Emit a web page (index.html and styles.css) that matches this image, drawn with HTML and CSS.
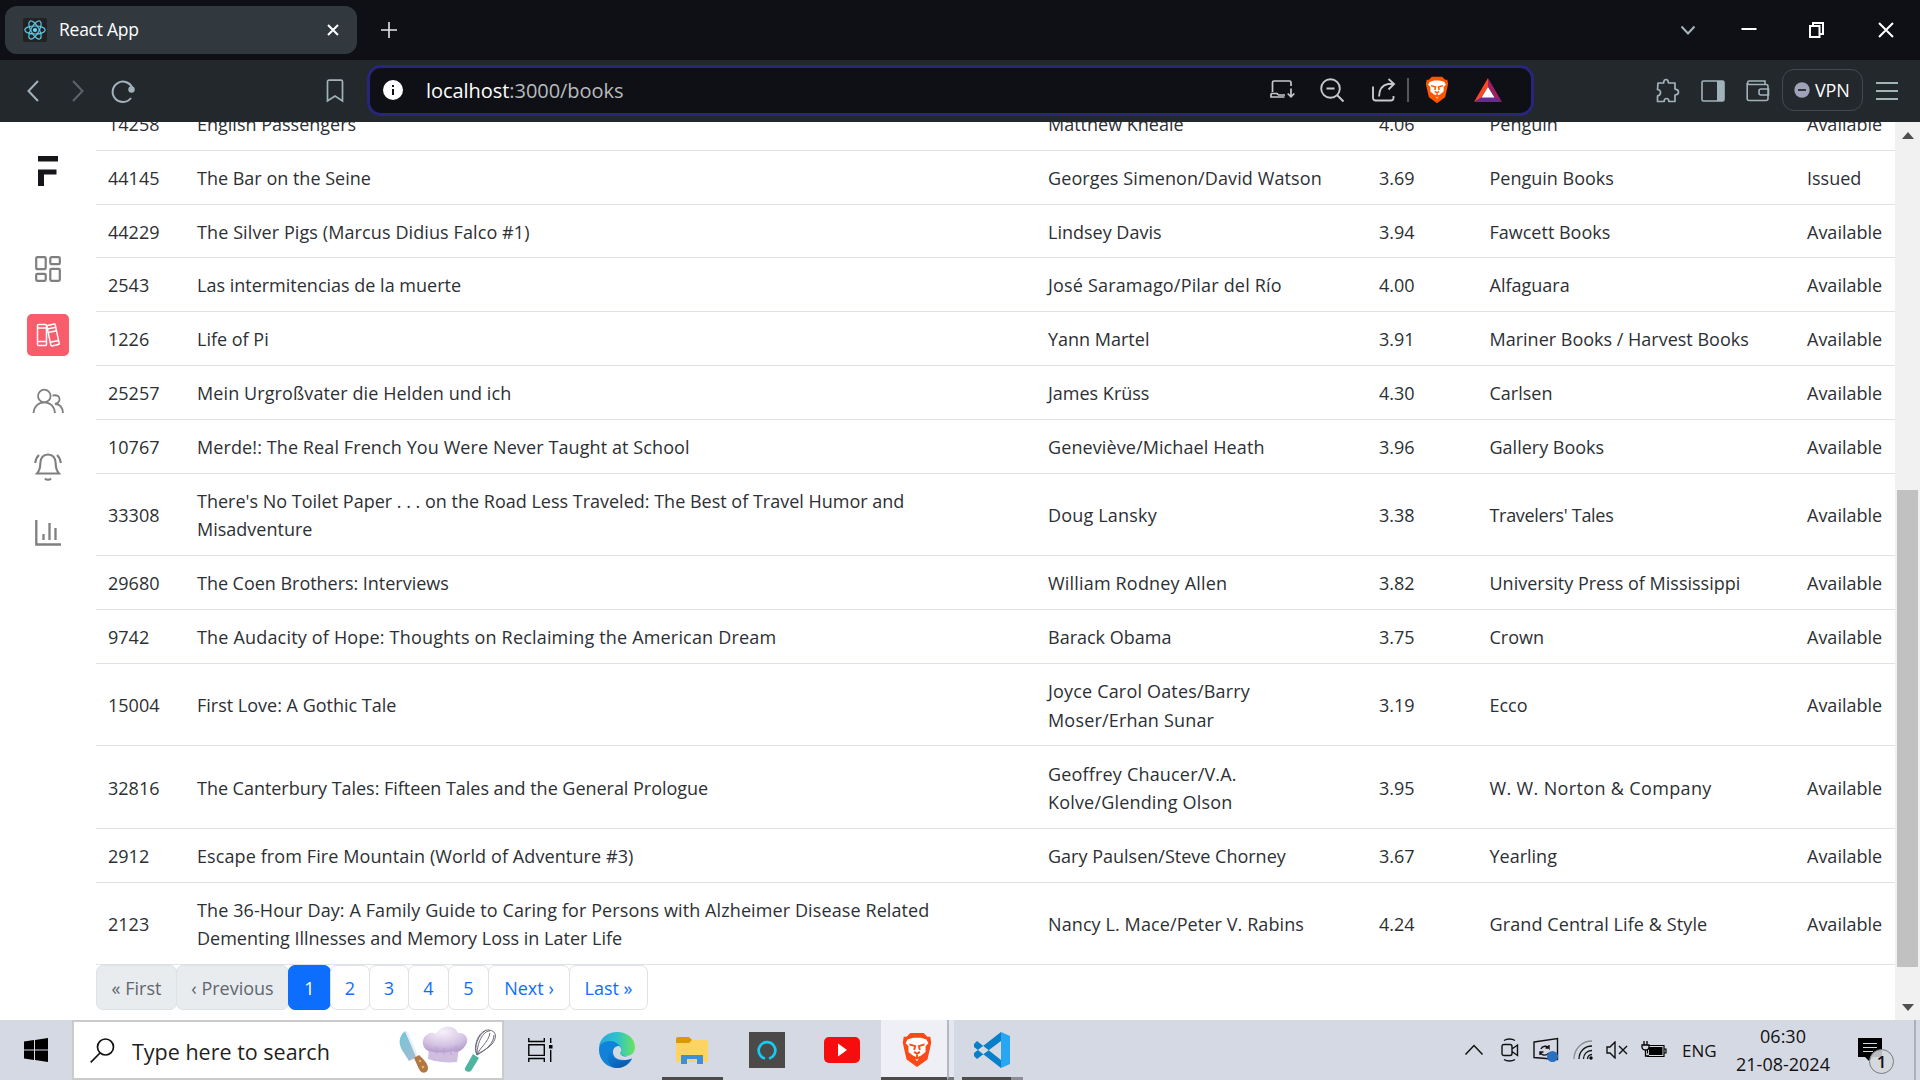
FILE: index.html
```html
<!DOCTYPE html>
<html lang="en">
<head>
<meta charset="utf-8">
<title>React App</title>
<link rel="stylesheet" href="styles.css">
</head>
<body>
<div class="screen">
  <header class="tabstrip">
    <div class="tab">
      <svg class="tab-icon" width="24" height="24" viewBox="0 0 24 24"><rect width="24" height="24" rx="2" fill="#222"/><g fill="none" stroke="#5fc9e6" stroke-width="1.2"><ellipse cx="12" cy="12" rx="10.2" ry="4"/><ellipse cx="12" cy="12" rx="10.2" ry="4" transform="rotate(60 12 12)"/><ellipse cx="12" cy="12" rx="10.2" ry="4" transform="rotate(120 12 12)"/></g><circle cx="12" cy="12" r="2.1" fill="#61dafb"/></svg>
      <span class="tab-title">React App</span>
      <svg class="tab-close" width="12" height="12" viewBox="0 0 12 12"><path d="M1 1l10 10M11 1L1 11" stroke="#fff" stroke-width="2"/></svg>
    </div>
    <svg class="new-tab" width="18" height="18" viewBox="0 0 18 18"><path d="M9 1v16M1 9h16" stroke="#e4e6ea" stroke-width="1.6"/></svg>
    <div class="window-controls">
      <svg width="48" height="30" viewBox="0 0 48 30"><path d="M17.500 11.500l6.500 7 6.500-7" fill="none" stroke="#a6b4bc" stroke-width="2"/></svg>
      <svg width="68" height="30" viewBox="0 0 68 30"><path d="M29.500 14h15" stroke="#fff" stroke-width="2"/></svg>
      <svg width="68" height="30" viewBox="0 0 68 30"><path d="M30 11h9.500v11H30zM33 11V8h10v11h-3" fill="none" stroke="#fff" stroke-width="2"/></svg>
      <svg class="close" width="70" height="30" viewBox="0 0 70 30"><path d="M29 8l14 14M43 8L29 22" stroke="#fff" stroke-width="2"/></svg>
    </div>
  </header>

  <nav class="toolbar">
    <div class="nav-left">
      <svg width="66" height="32" viewBox="0 0 66 32"><path d="M38 6l-9.500 10 9.500 10" fill="none" stroke="#a2b2ba" stroke-width="2"/></svg>
      <svg width="24" height="32" viewBox="0 0 24 32"><path d="M7 6l9.500 10L7 26" fill="none" stroke="#5a666c" stroke-width="2"/></svg>
      <svg width="66" height="32" viewBox="0 0 66 32"><path d="M42.500 13.500A10.200 10.200 0 1 0 41 23" fill="none" stroke="#a2b2ba" stroke-width="2"/><circle cx="41.500" cy="14.500" r="3.200" fill="#a2b2ba"/></svg>
      <svg class="bookmark" width="18" height="24" viewBox="0 0 18 24"><path d="M3 1.200h12a1.500 1.500 0 0 1 1.500 1.500V22L9 17 1.500 22V2.700A1.500 1.500 0 0 1 3 1.200z" fill="none" stroke="#a2b2ba" stroke-width="1.700"/></svg>
    </div>
    <div class="url-box">
      <svg width="20" height="20" viewBox="0 0 20 20"><circle cx="10" cy="10" r="10" fill="#fff"/><path d="M10 9v6M10 5v2" stroke="#0f1015" stroke-width="2"/></svg>
      <p class="url"><b>localhost</b>:3000/books</p>
      <div class="url-actions">
        <svg width="26" height="24" viewBox="0 0 26 24"><g fill="none" stroke="#c6c8cb" stroke-width="1.700"><path d="M3.500 14V4.500a1.500 1.500 0 0 1 1.500-1.500h15.500a1.500 1.500 0 0 1 1.500 1.500V8M2 15.500h6l1.500 1.500H16M2 15.500V19h13.500M22 10.500v8M18.700 15.500l3.300 3.300 3.300-3.300"/></g></svg>
        <svg width="26" height="26" viewBox="0 0 26 26"><g fill="none" stroke="#c6c8cb" stroke-width="1.900"><circle cx="11.500" cy="11.500" r="9.300"/><path d="M18 18l6.500 6.500M7.500 11.500h8"/></g></svg>
        <svg width="26" height="26" viewBox="0 0 26 26"><path d="M2 9.500V21a2.500 2.500 0 0 0 2.500 2.500H20a2.500 2.500 0 0 0 2.500-2.500v-2M8 19.500c.3-7.500 3-11.500 9-12.500h6M17.500 2l5.500 5-5.500 5.500" fill="none" stroke="#c6c8cb" stroke-width="1.900"/></svg>
        <i class="url-rule"></i>
        <svg width="24" height="28" viewBox="0 0 32 38"><path d="M9 1h14l4 4 3 0 1 6-1 5-3 13-11 8-11-8L2 16l-1-5 1-6 3 0z" fill="#ff5500"/><path d="M6 8l6-2h8l6 2 2 4-3 3 0 6-5 4-4 6-4-6-5-4V15l-3-3z" fill="#fff"/><path d="M8 13l6 2-1 4M24 13l-6 2 1 4M13 21l3 2 3-2M16 23v4M12 26l4 2 4-2" fill="none" stroke="#ff5500" stroke-width="2"/></svg>
        <svg width="28" height="24" viewBox="0 0 28 24"><path d="M14 0L0 24l7-4L14 9z" fill="#ff4724"/><path d="M14 0l14 24-7-4L14 9z" fill="#9e1f63"/><path d="M0 24h28l-8-5H8z" fill="#662d91"/><path d="M14 9l6.500 10.500h-13z" fill="#fff"/></svg>
      </div>
    </div>
    <div class="nav-right">
      <svg width="26" height="26" viewBox="0 0 26 26"><path d="M3 5h5.500c.6-1.200-.2-3.500 2.500-3.500S13 3.800 13.600 5H20v6c1 .6 3.500 0 3.500 3S21 16.500 20 17v6.500h-6c-.5-1 .2-3-2.500-3s-2 2-2.500 3H2.500V18c1-.6 3-.3 3-3.500s-2-2.500-3-3z" fill="none" stroke="#a2b2ba" stroke-width="1.700" stroke-linejoin="round"/></svg>
      <svg width="24" height="22" viewBox="0 0 24 22"><rect x="1" y="1" width="22" height="20" rx="1.500" fill="none" stroke="#a2b2ba" stroke-width="1.600"/><path d="M16 1h7v20h-7z" fill="#a2b2ba"/></svg>
      <svg width="24" height="22" viewBox="0 0 24 22"><path d="M1.200 3v15.500a2 2 0 0 0 2 2H20a2 2 0 0 0 2-2V6.500a2 2 0 0 0-2-2H3A1.800 1.800 0 0 1 3 1h16v3M22.500 9H15a2 2 0 0 0-2 2v2a2 2 0 0 0 2 2h7.500z" fill="none" stroke="#a2b2ba" stroke-width="1.600"/></svg>
      <div class="vpn"><svg width="16" height="16" viewBox="0 0 16 16"><circle cx="8" cy="8" r="7.700" fill="#a0a1b8"/><path d="M4 8h8" stroke="#23272c" stroke-width="1.800"/></svg><span>VPN</span></div>
      <svg width="22" height="18" viewBox="0 0 22 18"><path d="M0 1h22M0 9h22M0 17h22" stroke="#a2b2ba" stroke-width="1.800"/></svg>
    </div>
  </nav>

  <main class="page">
    <aside class="sidebar">
      <svg class="logo" width="20" height="30" viewBox="0 0 20 30"><path d="M0 0h20v5.500H0zM0 13.500h18.500v5H6V30H0z" fill="#16161a"/></svg>
      <a class="item"><svg width="26" height="26" viewBox="0 0 26 26"><g fill="none" stroke="#7f7f7f" stroke-width="2.200"><rect x="1.200" y="1.200" width="9.500" height="12" rx="1.200"/><rect x="15.300" y="1.200" width="9.500" height="7" rx="1.200"/><rect x="1.200" y="17.800" width="9.500" height="7" rx="1.200"/><rect x="15.300" y="12.800" width="9.500" height="12" rx="1.200"/></g></svg></a>
      <a class="item active"><svg width="24" height="24" viewBox="0 0 24 24"><g fill="none" stroke="#fff" stroke-width="1.500"><rect x="1.500" y="1.500" width="9" height="21" rx="1"/><path d="M1.500 5h9M1.500 18.500h9"/><g transform="rotate(-12 17 12)"><rect x="12.800" y="1.500" width="8.500" height="21" rx="1"/><path d="M12.800 5h8.500M12.800 8.500h8.500M12.800 18.500h8.500"/></g></g></svg></a>
      <a class="item"><svg width="32" height="26" viewBox="0 0 32 26"><g fill="none" stroke="#808080" stroke-width="1.800"><circle cx="12.300" cy="8" r="6.300"/><path d="M1.500 25c.5-6.500 5-10.700 10.800-10.700S22.500 18.500 23 25M20.500 7.500c5-1 7.500 1 7 4.200-.3 2.300-2 3.800-4.500 4.300 4.500 0 7.500 3.500 8 9"/></g></svg></a>
      <a class="item"><svg width="28" height="28" viewBox="0 0 28 28"><g fill="none" stroke="#7f7f7f" stroke-width="2.100"><path d="M3 20.500h22c-3-3.500-3.300-6-3.300-10C21.700 4.500 18.500 1.500 14 1.500S6.300 4.500 6.300 10.500c0 4-.3 6.500-3.300 10zM5 2C2.800 4 1.500 6.500 1.200 10M23 2c2.200 2 3.500 4.500 3.800 8M11 25.500c1.500 1.600 4.500 1.600 6 0"/></g></svg></a>
      <a class="item"><svg width="26" height="26" viewBox="0 0 26 26"><path d="M1.300 0v24.500H26M8.500 14v6M14.500 3v17M20.500 8v12" fill="none" stroke="#7f7f7f" stroke-width="2.300"/></svg></a>
    </aside>

    <section class="content">
      <table class="books">
        <colgroup><col class="c-id"><col class="c-title"><col class="c-author"><col class="c-rating"><col class="c-pub"><col class="c-status"></colgroup>
        <tbody>
          <tr><td>14258</td><td>English Passengers</td><td>Matthew Kneale</td><td>4.06</td><td>Penguin</td><td>Available</td></tr>
          <tr><td>44145</td><td>The Bar on the Seine</td><td class="wide">Georges Simenon/David Watson</td><td>3.69</td><td>Penguin Books</td><td>Issued</td></tr>
          <tr class="short"><td>44229</td><td class="wide">The Silver Pigs (Marcus Didius Falco #1)</td><td>Lindsey Davis</td><td>3.94</td><td>Fawcett Books</td><td>Available</td></tr>
          <tr><td>2543</td><td>Las intermitencias de la muerte</td><td class="wider">José Saramago/Pilar del Río</td><td>4.00</td><td>Alfaguara</td><td>Available</td></tr>
          <tr><td>1226</td><td>Life of Pi</td><td>Yann Martel</td><td>3.91</td><td>Mariner Books / Harvest Books</td><td>Available</td></tr>
          <tr><td>25257</td><td class="wide">Mein Urgroßvater die Helden und ich</td><td>James Krüss</td><td>4.30</td><td>Carlsen</td><td>Available</td></tr>
          <tr><td>10767</td><td class="wide">Merde!: The Real French You Were Never Taught at School</td><td class="wide">Geneviève/Michael Heath</td><td>3.96</td><td>Gallery Books</td><td>Available</td></tr>
          <tr class="double"><td>33308</td><td>There's No Toilet Paper . . . on the Road Less Traveled: The Best of Travel Humor and<br>Misadventure</td><td class="wider">Doug Lansky</td><td>3.38</td><td class="narrow">Travelers' Tales</td><td>Available</td></tr>
          <tr><td>29680</td><td class="slim">The Coen Brothers: Interviews</td><td class="wider">William Rodney Allen</td><td>3.82</td><td>University Press of Mississippi</td><td>Available</td></tr>
          <tr><td>9742</td><td class="wider">The Audacity of Hope: Thoughts on Reclaiming the American Dream</td><td>Barack Obama</td><td>3.75</td><td>Crown</td><td>Available</td></tr>
          <tr class="double"><td>15004</td><td>First Love: A Gothic Tale</td><td class="wider">Joyce Carol Oates/Barry<br>Moser/Erhan Sunar</td><td>3.19</td><td>Ecco</td><td>Available</td></tr>
          <tr class="double tall"><td>32816</td><td class="slim">The Canterbury Tales: Fifteen Tales and the General Prologue</td><td class="wider">Geoffrey Chaucer/V.A.<br>Kolve/Glending Olson</td><td>3.95</td><td class="widest">W. W. Norton &amp; Company</td><td>Available</td></tr>
          <tr><td>2912</td><td class="wide">Escape from Fire Mountain (World of Adventure #3)</td><td>Gary Paulsen/Steve Chorney</td><td>3.67</td><td>Yearling</td><td>Available</td></tr>
          <tr class="double"><td>2123</td><td><span class="wide">The 36-Hour Day: A Family Guide to Caring for Persons with Alzheimer Disease Related</span><br>Dementing Illnesses and Memory Loss in Later Life</td><td class="wide">Nancy L. Mace/Peter V. Rabins</td><td>4.24</td><td class="wide">Grand Central Life &amp; Style</td><td>Available</td></tr>
        </tbody>
      </table>
      <ul class="pagination">
        <li class="disabled w-first">« First</li><li class="disabled w-prev">‹ Previous</li><li class="current">1</li><li>2</li><li>3</li><li class="w-num">4</li><li class="w-num">5</li><li class="w-next">Next ›</li><li class="w-last">Last »</li>
      </ul>
    </section>

    <div class="scrollbar">
      <svg width="12" height="7" viewBox="0 0 12 7"><path d="M6 0l6 7H0z" fill="#505050"/></svg>
      <div class="thumb"></div>
      <svg width="12" height="7" viewBox="0 0 12 7"><path d="M6 7L0 0h12z" fill="#505050"/></svg>
    </div>
  </main>

  <footer class="taskbar">
    <div class="start"><svg width="24" height="24" viewBox="0 0 24 24"><path d="M0 3.400l10-1.400v9.500H0zM11 1.900L24 0v11.500H11zM0 12.500h10V22L0 20.600zM11 12.500h13V24l-13-1.900z" fill="#000"/></svg></div>
    <div class="search">
      <svg width="25" height="25" viewBox="0 0 25 25"><circle cx="15.500" cy="9" r="8" fill="none" stroke="#111" stroke-width="1.700"/><path d="M10 15l-9.300 9.300" stroke="#111" stroke-width="1.700"/></svg>
      <span>Type here to search</span>
      <svg class="food" width="100" height="50" viewBox="0 0 100 50">
        <defs><linearGradient id="blade" x1="0" y1="0" x2="1" y2="1"><stop offset="0" stop-color="#6fc7da"/><stop offset="1" stop-color="#aab9d0"/></linearGradient><radialGradient id="hat" cx=".45" cy=".2" r=".9"><stop offset="0" stop-color="#f7f1fb"/><stop offset=".6" stop-color="#d3c2e2"/><stop offset="1" stop-color="#a98fc6"/></radialGradient></defs>
        <path d="M6 6C0 11-1 18 3 25l7 11 8-4z" fill="url(#blade)"/><path d="M6 6l3 1 10 24-2 1z" fill="#e6f1f7"/><path d="M15 33l5-3c4 4 9 8 9 13 0 6-7 6-9 1z" fill="#b07647"/><circle cx="21" cy="36" r="1.300" fill="#f3b43f"/><circle cx="24" cy="42" r="1.300" fill="#f3b43f"/>
        <path d="M30 21l-1 13c8 3 20 4 29 3l2-14z" fill="#d0bee1"/><path d="M30 26c-7-2-9-13-1-17 4-2 6-1 8 0C41 0 56-1 59 8c8-1 12 7 7 13-3 5-8 7-12 5-8 2-16 2-24 0z" fill="url(#hat)"/><path d="M37 22l1 7M45 23v7M52 23v7M57 21v6" stroke="#b9a1d2" stroke-width=".9"/>
        <g fill="none" stroke="#6c6b7b" stroke-width="1"><path d="M78 30C73 18 82 4 90 5s8 8 3 14-13 8-15 11C78 15 86 5 91 6M78 30c9-5 17-12 17-20M78 30C74 22 80 9 86 6M78 30c3-8 11-12 13-22"/></g><path d="M74 29l6 4-8 13c-2 2-7 0-6-3z" fill="#4fb59f"/>
      </svg>
    </div>
    <div class="apps">
      <div class="app view"><svg width="25" height="24" viewBox="0 0 25 24"><path d="M.8 0v3.500h15.500V0M.8 24v-3.500h15.500V24M.8 6.700h15.500v10.700H.8zM22.700 0v5M22.700 12v12" fill="none" stroke="#000" stroke-width="1.400"/><path d="M21 7h3.500v3.500H21z"/></svg></div>
      <div class="app edge"><svg width="36" height="36" viewBox="0 0 36 36"><defs><linearGradient id="e1"><stop offset="0" stop-color="#2ba8e2"/><stop offset=".5" stop-color="#2ec1cc"/><stop offset="1" stop-color="#6be45b"/></linearGradient><linearGradient id="e2" x1="0" y1="0" x2="1" y2="1"><stop offset="0" stop-color="#0e86dc"/><stop offset="1" stop-color="#0c4da0"/></linearGradient></defs><path d="M0 18C0 8 8 4 18 6l4 6 4 12 7 3c-3 6-9 9-15 9C8 36 0 28 0 18z" fill="#1083d9"/><path d="M0 14C2 5 9 0 18 0c11 0 18 7 18 15 0 6-4 9-9 9-4 0-7-1-6-3 2-2 2-5 0-7C15 7 6 8 0 14z" fill="url(#e1)"/><path d="M12 17c-1 8 7 14 15 11 4-1 6-3 6-3-3 7-9 11-15 11C8 35 6 23 12 17z" fill="url(#e2)"/><path d="M14 20c0-4 3-6 6-6 3 2 3 5 1 7 0 3 5 4 12 4 0 2-3 3-8 3-7 0-11-3-11-8z" fill="#d5d9e3"/></svg></div>
      <div class="app explorer open"><svg width="32" height="27" viewBox="0 0 32 27"><path d="M0 2a2 2 0 0 1 2-2h11l3 3v5H0z" fill="#d99a08"/><path d="M0 6h13l3-3h14a2 2 0 0 1 2 2v20H0z" fill="#fdd461"/><path d="M5 27V18h22v9h-6v-5H11v5z" fill="#3b90d8"/></svg></div>
      <div class="app alexa"><svg width="36" height="36" viewBox="0 0 36 36"><path d="M0 0h36v36H0z" fill="#4b4a48"/><path d="M16 26.500A8.300 8.300 0 1 1 20 26.500" fill="none" stroke="#16cbf3" stroke-width="2.700"/></svg></div>
      <div class="app youtube"><svg width="36" height="26" viewBox="0 0 36 26"><rect width="36" height="26" rx="5" fill="#f70d0d"/><path d="M14 6.500v13l9-6.500z" fill="#fff"/></svg></div>
      <div class="app brave open"><svg width="32" height="36" viewBox="0 0 32 38"><path d="M9 1h14l4 4 3 0 1 6-1 5-3 13-11 8-11-8L2 16l-1-5 1-6 3 0z" fill="#fb4a17"/><path d="M6 8l6-2h8l6 2 2 4-3 3 0 6-5 4-4 6-4-6-5-4V15l-3-3z" fill="#fff"/><path d="M8 13l6 2-1 4M24 13l-6 2 1 4M13 21l3 2 3-2M16 23v4M12 26l4 2 4-2" fill="none" stroke="#fb4a17" stroke-width="2"/></svg></div>
      <div class="stack"></div>
      <div class="app code open"><svg width="36" height="36" viewBox="0 0 36 36"><path d="M0 12l3-3 24 19v8L0 15zM0 24l3 3L27 9V0L0 21z" fill="#087fc9"/><path d="M27 0l9 4v28l-9 4z" fill="#27a6f1"/></svg></div>
      <div class="code-stack"></div>
    </div>
    <div class="tray">
      <svg width="20" height="12" viewBox="0 0 20 12"><path d="M1.500 10.500l8.500-9 8.500 9" fill="none" stroke="#111" stroke-width="1.500"/></svg>
      <svg width="18" height="24" viewBox="0 0 18 24"><path d="M3 6.500h6a2 2 0 0 1 2 2v7a2 2 0 0 1-2 2H3a2 2 0 0 1-2-2v-7a2 2 0 0 1 2-2zM11 11l5.500-4v10.500L11 13.500M3 2.500c3-2 8-2 11 0M3 21.500c3 2 8 2 11 0" fill="none" stroke="#111" stroke-width="1.400"/></svg>
      <svg width="26" height="26" viewBox="0 0 26 26"><path d="M1 5l23.500-3.500v21L1 20.500z" fill="none" stroke="#111" stroke-width="1.400"/><path d="M8 12c1-3 6-4 8-1V8M16 11h-3.500M7 18v-3h3.500M7 15c2 4 6 4 9 1" fill="none" stroke="#111" stroke-width="1.400"/><circle cx="19.500" cy="19.500" r="5.500" fill="#2a70c0"/></svg>
      <svg width="20" height="20" viewBox="0 0 20 20"><g fill="none" stroke-width="1.300"><path d="M1 19C1 9 9 1 19 1" stroke="#8b8e97"/><path d="M6 19C6 11.500 11.500 6 19 6M10.500 19c0-5 3.500-8.500 8.500-8.500M14.500 19c0-2.500 2-4.500 4.500-4.500" stroke="#111"/></g><circle cx="18" cy="18" r="1.700"/></svg>
      <svg width="22" height="18" viewBox="0 0 22 18"><path d="M1 6h3l5-5v16l-5-5H1zM13 5l8 8M21 5l-8 8" fill="none" stroke="#111" stroke-width="1.400"/></svg>
      <svg width="26" height="18" viewBox="0 0 26 18"><path d="M6.500 4.500H23v11H6.500zM23 8h2v4h-2" fill="none" stroke="#000" stroke-width="1.200"/><path d="M8 6h13.500v8H8z"/><path d="M3 0v4M6 0v4M1 4h7v2c0 4-7 4-7 0zM4.500 9v6H8" fill="#d5d9e3" stroke="#000" stroke-width="1.300"/></svg>
      <span class="lang">ENG</span>
      <div class="clock"><span>06:30</span><span>21-08-2024</span></div>
      <div class="notice"><svg width="24" height="23" viewBox="0 0 24 23"><path d="M0 0h24v19h-9l-4 4-4-4H0z"/><path d="M5 5.500h14M5 9.500h14M5 13.500h10" stroke="#d5d9e3" stroke-width="1.200"/></svg><b>1</b></div>
      <i class="peek"></i>
    </div>
  </footer>
</div>
</body>
</html>
```
FILE: styles.css
```css
* { box-sizing: border-box; }
body {
  margin: 0;
  font-family: "Open Sans", "Noto Sans", sans-serif;
  background: #fff;
}
svg { display: block; flex: none; }
.screen {
  width: 1920px;
  height: 1080px;
  display: flex;
  flex-direction: column;
  overflow: hidden;
}

/* Browser tabs */
.tabstrip {
  height: 60px;
  flex: none;
  background: #0e1015;
  display: flex;
  align-items: center;
  padding-left: 5px;
}
.tab {
  width: 352px;
  height: 48px;
  border-radius: 12px;
  background: #31393f;
  display: flex;
  align-items: center;
  padding: 0 18px;
}
.tab-title {
  color: #fff;
  font-size: 17.5px;
  letter-spacing: -0.25px;
  margin: 0 0 2px 12px;
  flex: 1;
}
.new-tab { margin-left: 23px; }
.window-controls { margin-left: auto; display: flex; }
.window-controls .close { margin-left: 2px; }

/* Address bar */
.toolbar {
  height: 62px;
  flex: none;
  background: #23282c;
  display: flex;
  align-items: center;
}
.nav-left { width: 367px; display: flex; align-items: center; }
.bookmark { margin-left: 170px; }
.url-box {
  width: 1167px;
  height: 51px;
  margin-bottom: 2px;
  border: 3px solid #28267a;
  border-radius: 14px;
  background: #0e1015;
  display: flex;
  align-items: center;
  padding: 0 29px 0 13px;
}
.url {
  margin: 0 0 0 23px;
  color: #b9bbbd;
  font-size: 20px;
  letter-spacing: -0.05px;
  flex: 1;
}
.url b { font-weight: 400; color: #fff; }
.url-actions { display: flex; align-items: center; }
.url-actions svg:nth-child(2) { margin-left: 24px; }
.url-actions svg:nth-child(3) { margin-left: 26px; }
.url-rule { width: 2px; height: 24px; background: #55575c; margin: 0 16px 0 10px; }
.url-actions svg:nth-child(6) { margin-left: 25px; }
.nav-right {
  display: flex;
  align-items: center;
  margin-left: 121px;
}
.nav-right > svg:nth-child(2) { margin-left: 20px; }
.nav-right > svg:nth-child(3) { margin-left: 21px; }
.vpn {
  width: 81px;
  height: 42px;
  margin: 0 13px 2px 12px;
  border: 1px solid #3f4b50;
  border-radius: 12px;
  display: flex;
  align-items: center;
  gap: 5px;
  padding-left: 11px;
  color: #fff;
  font-size: 18px;
  letter-spacing: -0.2px;
}

/* Page */
.page {
  height: 898px;
  flex: none;
  display: flex;
  overflow: hidden;
}
.sidebar {
  width: 96px;
  flex: none;
  display: flex;
  flex-direction: column;
  align-items: center;
  padding-top: 34px;
}
.logo { margin-bottom: 62px; }
.item {
  width: 42px;
  height: 42px;
  margin-bottom: 24px;
  border-radius: 5px;
  display: flex;
  align-items: center;
  justify-content: center;
}
.item.active { background: #f95c6a; }
.content { width: 1799px; flex: none; }
.books {
  width: 1799px;
  margin-top: -25px;
  table-layout: fixed;
  border-collapse: separate;
  border-spacing: 0;
  color: #2c3034;
  font-size: 18px;
  line-height: 28.5px;
}
.c-id { width: 90px; }
.c-title { width: 850px; }
.c-author { width: 331px; }
.c-rating { width: 111px; }
.c-pub { width: 317px; }
.c-status { width: 100px; }
.books tr { height: 54px; }
.books tr.short { height: 53px; }
.books tr.double { height: 82px; }
.books tr.tall { height: 83px; }
.books td {
  padding: 2px 0 0 12px;
  border-bottom: 1px solid #dee2e6;
  vertical-align: middle;
  white-space: nowrap;
}
.books td:nth-child(2) { padding-left: 11px; }
.books td:nth-child(5) { padding-left: 11.5px; }
.books .double td:nth-child(2) { padding-top: 1px; line-height: 28px; }
.books .slim { letter-spacing: -0.03px; }
.books .narrow { letter-spacing: -0.3px; }
.books .wide { letter-spacing: 0.1px; }
.books .wider { letter-spacing: 0.18px; }
.books .widest { letter-spacing: 0.35px; }
.pagination {
  list-style: none;
  margin: 0;
  padding: 0;
  display: flex;
  font-size: 18px;
  color: #0d6efd;
}
.pagination li {
  width: 40px;
  height: 45px;
  margin-right: -1px;
  border: 1px solid #dee2e6;
  border-radius: 7px;
  display: flex;
  align-items: center;
  justify-content: center;
  white-space: nowrap;
}
.pagination .disabled { background: #e9ecef; color: #5f666d; }
.pagination .current { width: 43px; background: #0d6efd; border-color: #0d6efd; color: #fff; }
.pagination .w-first { width: 81px; }
.pagination .w-prev { width: 113px; }
.pagination .w-num { width: 41px; }
.pagination .w-next { width: 82px; }
.pagination .w-last { width: 79px; }
.scrollbar {
  width: 25px;
  background: #f1f1f1;
  display: flex;
  flex-direction: column;
  align-items: center;
  padding: 10px 0 9px;
}
.thumb { width: 21px; height: 477px; margin: 351px 0 auto; background: #c1c1c1; }

/* Taskbar */
.taskbar {
  height: 60px;
  flex: none;
  background: #d5d9e3;
  display: flex;
}
.start { width: 72px; padding: 18px 0 0 24px; }
.search {
  width: 432px;
  border: 2px solid #cacaca;
  background: #fff;
  display: flex;
  align-items: center;
  padding-left: 16px;
  font-size: 21.5px;
  color: #1f1f1f;
}
.search span { margin: 3px 0 0 17px; flex: 1; letter-spacing: 0; }
.search .food { margin-right: 3px; }
.apps { display: flex; margin-left: 4px; }
.app { width: 74px; display: flex; align-items: center; justify-content: center; }
.app.view { width: 64px; }
.app.edge { width: 90px; }
.app.open { border-bottom: 3px solid #4c4b4a; padding-top: 3px; }
.app.explorer { width: 61px; padding-right: 2px; }
.app.alexa { width: 88px; }
.app.youtube { width: 62px; }
.app.brave { width: 66px; margin-left: 8px; padding-left: 6px; background: #eef0f5; }
.stack { width: 7px; background: #e3e7ef; border-left: 2px solid #b3b8c4; border-bottom: 3px solid #73757a; }
.app.code { width: 49px; margin-left: 8px; padding-left: 10px; }
.code-stack { width: 12px; border-bottom: 3px solid #8b8e95; }
.tray {
  margin-left: auto;
  display: flex;
  align-items: center;
  color: #111;
  font-size: 17px;
}
.tray > svg:nth-child(2) { margin-left: 17px; }
.tray > svg:nth-child(3) { margin-left: 14px; }
.tray > svg:nth-child(4) { margin-left: 14px; }
.tray > svg:nth-child(5) { margin-left: 13px; }
.tray > svg:nth-child(6) { margin-left: 13px; }
.lang { width: 34px; margin-left: 15px; }
.clock {
  width: 94px;
  margin: 0 28px 0 20px;
  display: flex;
  flex-direction: column;
  align-items: center;
  line-height: 28px;
  font-size: 18px;
}
.notice { width: 56px; height: 60px; padding-top: 18px; position: relative; }
.notice b {
  position: absolute;
  left: 11px;
  top: 29px;
  width: 25px;
  height: 25px;
  border: 1px solid #777b84;
  border-radius: 50%;
  background: rgba(213, 215, 220, .88);
  font-size: 17px;
  font-weight: 600;
  line-height: 23px;
  text-align: center;
}
.peek { width: 6px; height: 60px; border-left: 2px solid #a9afbb; }
```
